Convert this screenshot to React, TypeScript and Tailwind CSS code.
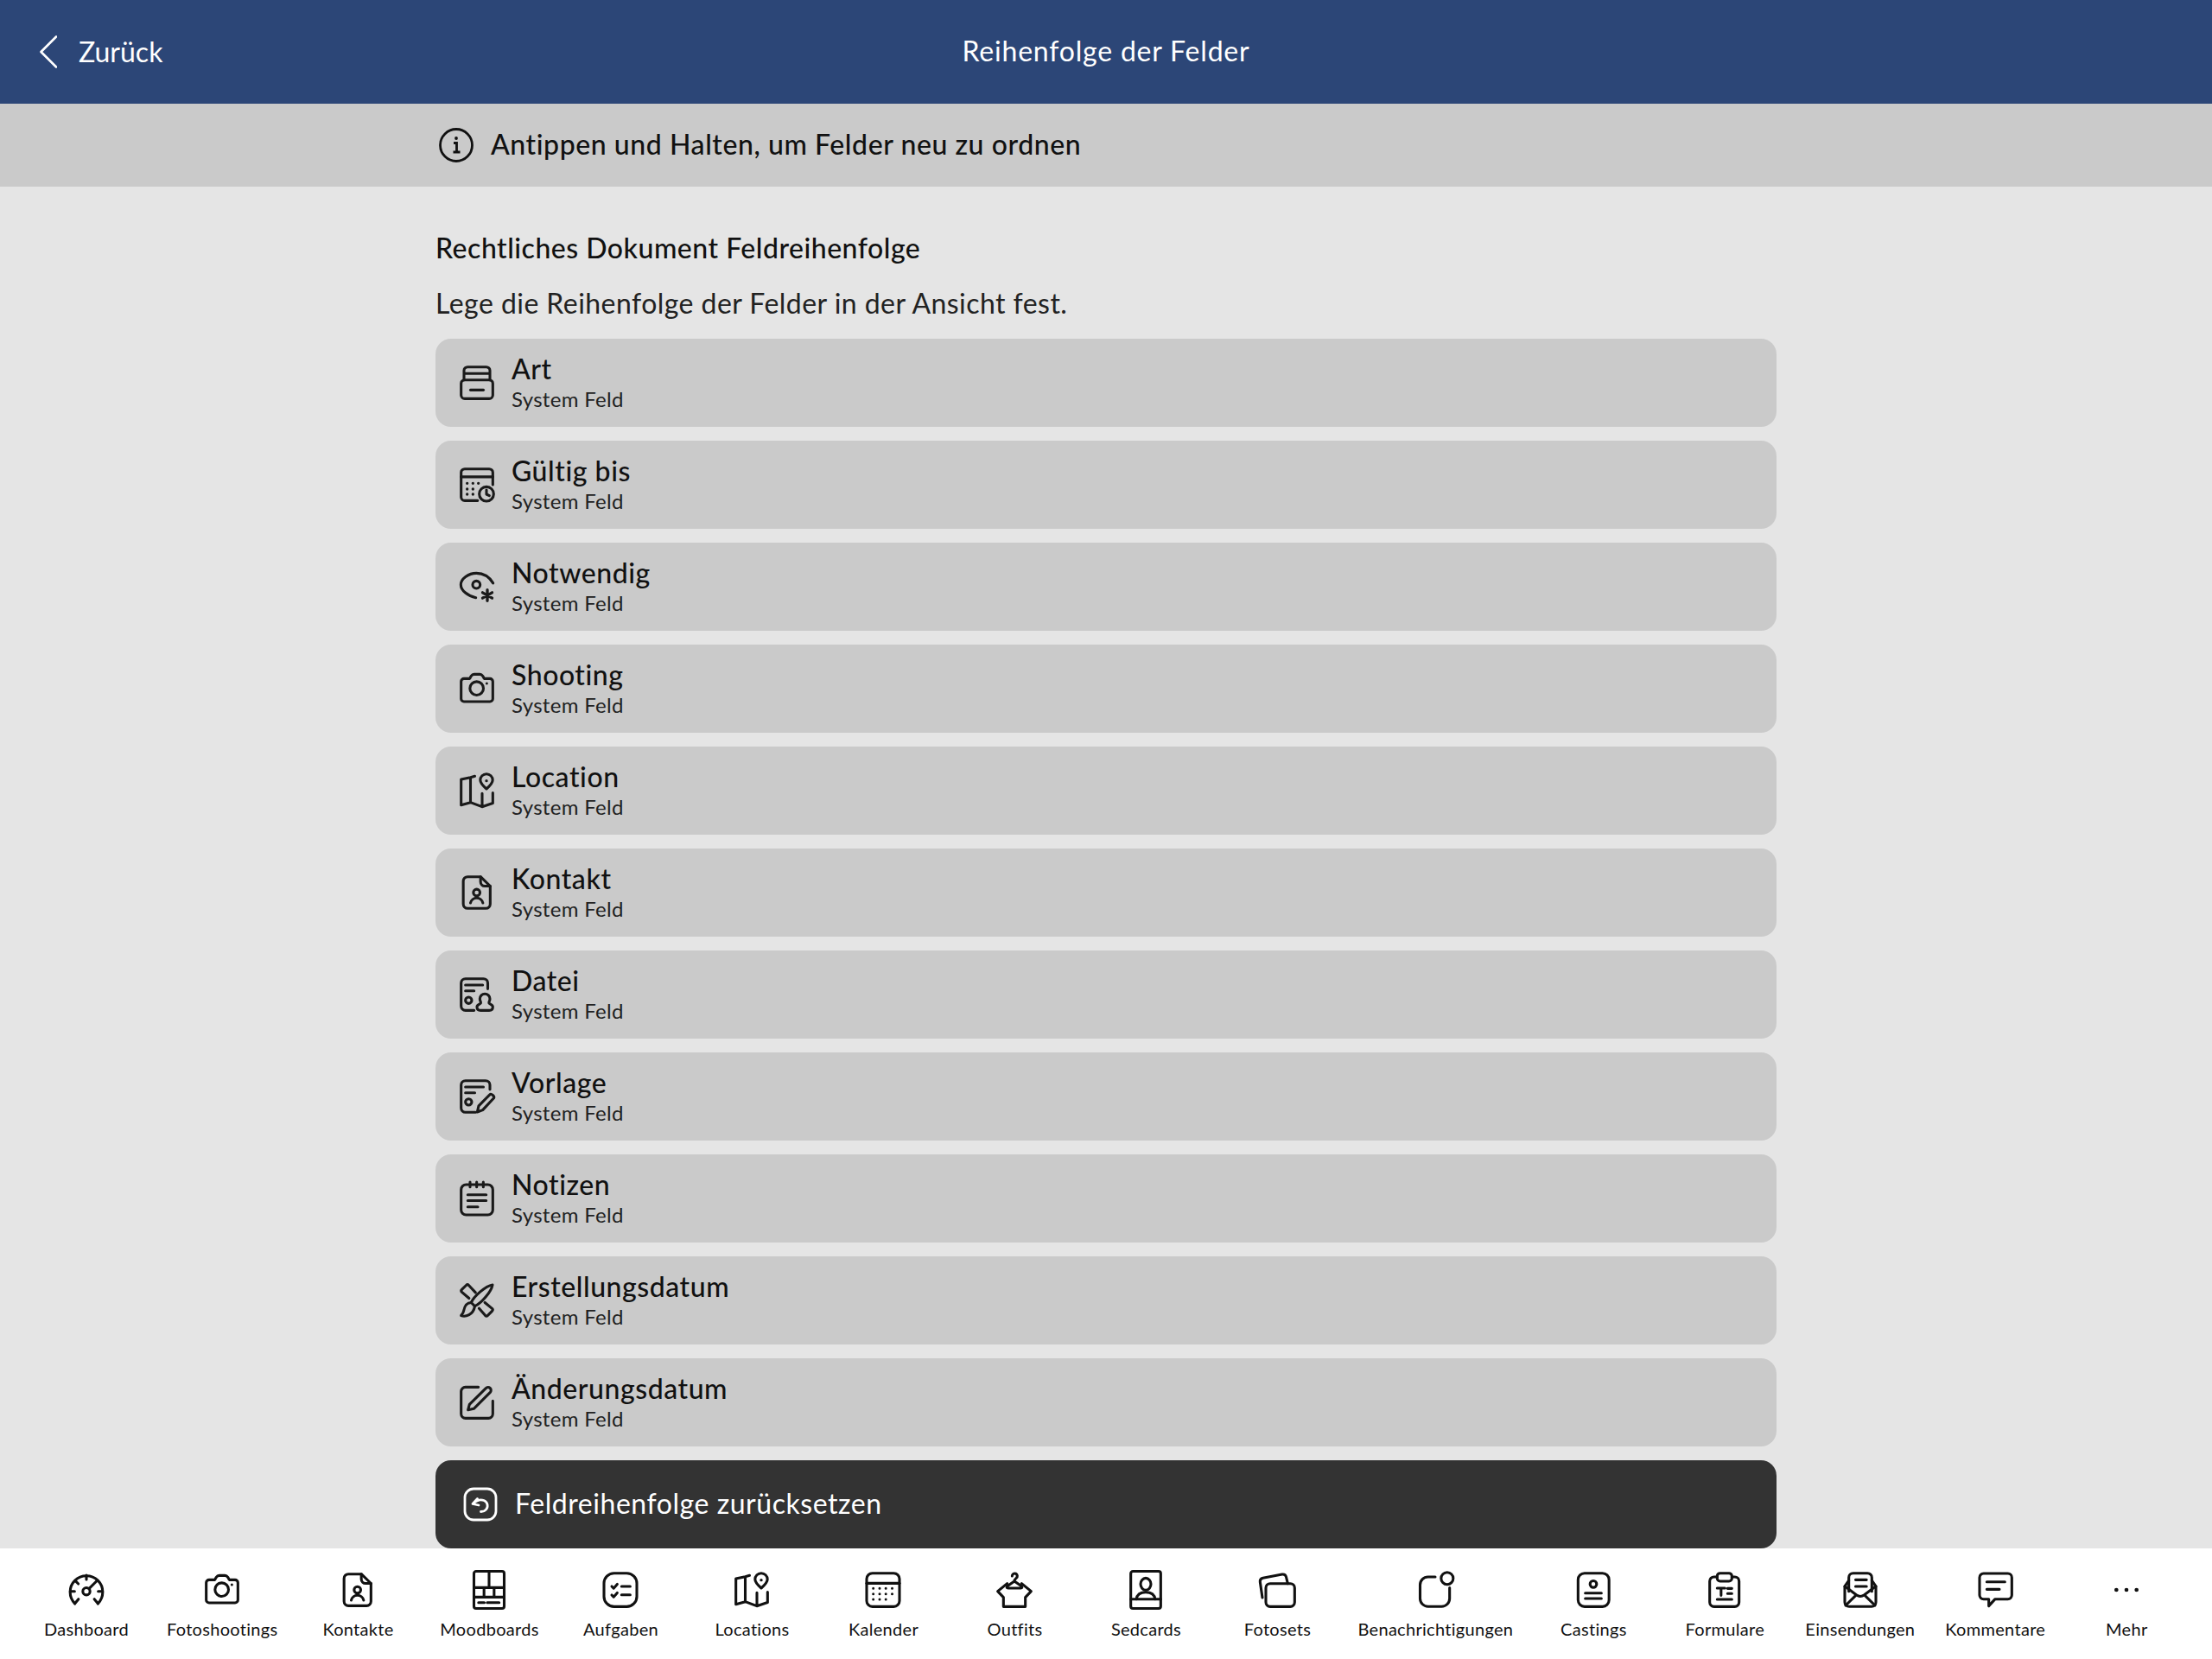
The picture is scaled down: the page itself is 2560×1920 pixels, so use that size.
import type { ReactNode } from 'react'

const font = { fontFamily: 'Lato, "Noto Sans", sans-serif' }

function Icon({ children, className = 'text-[#1a1a1a]' }: { children: ReactNode; className?: string }) {
  return (
    <svg
      viewBox="0 0 24 24"
      fill="none"
      stroke="currentColor"
      strokeWidth="1.85"
      strokeLinecap="round"
      strokeLinejoin="round"
      className={`w-10 h-10 shrink-0 overflow-visible ${className}`}
    >
      {children}
    </svg>
  )
}

const drawer = (
  <>
    <rect x="1" y="10" width="22" height="13" rx="2.5" />
    <path d="M3 10V3.5A2.5 2.5 0 0 1 5.500 1h13A2.500 2.500 0 0 1 21 3.500V10M3 5.500h18" />
    <path d="M7.500 17h9" />
  </>
)
const calendarClock = (
  <>
    <path d="M12.500 23H3.500A2.500 2.500 0 0 1 1 20.500V3.500A2.500 2.500 0 0 1 3.500 1h17A2.500 2.500 0 0 1 23 3.500V12" />
    <path d="M1 6.500h22" />
    <circle cx="18.600" cy="18.400" r="5" />
    <path d="M18.600 15.600v3l2 1" />
    <g strokeWidth="2">
      <path d="M5.200 11h.01M9.200 11h.01M13 11h.01M5.200 15h.01M9.200 15h.01M5.200 18.600h.01M9.200 18.600h.01" />
    </g>
  </>
)
const eyeStar = (
  <>
    <path d="M23.200 9.500C20.500 5 16 2.600 11.600 2.600 6 2.600 .8 6.500 .8 10.600c0 4 5 8 10.400 9" />
    <circle cx="11.600" cy="10.600" r="2.600" />
    <path strokeWidth="2" d="M19.200 14.200v7.600M15.900 16.100l6.600 3.800M22.500 16.100l-6.600 3.800" />
  </>
)
const camera = (
  <>
    <path d="M7 5l1-1.800Q8.800 2 10 2h4q1.200 0 2 1.200L17 5h4a2 2 0 0 1 2 2v12a2 2 0 0 1-2 2H3a2 2 0 0 1-2-2V7a2 2 0 0 1 2-2z" />
    <circle cx="11.800" cy="11.800" r="4.700" />
    <path strokeWidth="1.800" d="M18.800 8.400h.01" />
  </>
)
const mapPin = (
  <>
    <path d="M18.600 10.800c-2.800-2.400-4.300-4-4.300-6.100a4.300 4.300 0 0 1 8.600 0c0 2.100-1.500 3.700-4.300 6.100z" />
    <path strokeWidth="2" d="M18.600 5.200h.01" />
    <path d="M10.500 2L7.500 2.800 1 4.200V22l6.500-1.800 8 3 7.500-2.500V13.500M7.500 2.800v17.400M15.600 14v9" />
  </>
)
const docPerson = (
  <>
    <path d="M14.500 1H5.500a3 3 0 0 0-3 3v16a3 3 0 0 0 3 3h12.700a3 3 0 0 0 3-3V7.500z" />
    <path d="M14.500 1v3.500a3 3 0 0 0 3 3h3.700" />
    <circle cx="11.800" cy="12" r="2.300" />
    <path d="M7.500 19.200a4.400 4.400 0 0 1 8.600 0" />
  </>
)
const docUser = (
  <>
    <path d="M19.500 8V4a3 3 0 0 0-3-3H4a3 3 0 0 0-3 3v16a3 3 0 0 0 3 3h6" />
    <path d="M4 5.400h12M4 9.400h6" />
    <circle cx="6.200" cy="16" r="2.200" />
    <path d="M17.500 11.500a3.500 3.500 0 0 0-3.500 3.500c0 1.600 1 2.200.6 3-.4.700-2.600.8-2.600 2.500 0 1.500 1 2.500 2.500 2.500h6c1.500 0 2.500-1 2.500-2.500 0-1.700-2.200-1.800-2.600-2.500-.4-.8.600-1.400.6-3a3.500 3.500 0 0 0-3.500-3.500z" />
  </>
)
const docPen = (
  <>
    <path d="M21 7V4a3 3 0 0 0-3-3H4a3 3 0 0 0-3 3v16a3 3 0 0 0 3 3h7" />
    <path d="M4 5.400h12.500M4 9.400h6.500" />
    <circle cx="6.200" cy="15.800" r="2.200" />
    <path d="M12.200 22.800l1-4.300 7.700-7.800c1-1 3.700 1.200 2.700 2.500l-7.600 8.200z" />
  </>
)
const notes = (
  <>
    <rect x="1" y="2.400" width="22" height="21" rx="3.500" />
    <path d="M7.200 .6v3.400M11.800 .6v3.400M16.400 .6v3.400" />
    <path d="M5.600 9.400h12.800M5.600 13.500h12.800M5.600 17.800h7" />
  </>
)
const tools = (
  <>
    <path d="M6.500 10.500L1.500 6.200Q.6 5.300 1.500 4.400L4.500 1.500Q5.400.6 6.300 1.500L11 6.500" />
    <path d="M13.500 17.500l4.200 4.900q.9.900 1.800 0l3-3q.9-.9 0-1.800L17.500 13.500" />
    <path d="M22.800 1.200C18 2 10 9 8 13.500L10.500 16C15 14 22 6 22.800 1.200z" />
    <path d="M8 13.500C4 13.500 3.200 17 2.700 19.500 2.300 21.500 1 22 1 22.500c3 1.200 8.500-.5 9.500-6.500" />
  </>
)
const edit = (
  <>
    <path d="M13 1.400H4a3 3 0 0 0-3 3V20a3 3 0 0 0 3 3h16a3 3 0 0 0 3-3v-9" />
    <path d="M5.800 17.200l1-3.800L18.200 2.200a2 2 0 0 1 3 2.800L9.800 16.400z" />
  </>
)
const gauge = (
  <>
    <path d="M4 21.500L6.500 18.400M20 21.500L17.500 18.400" />
    <path d="M4 21.500A11.300 11.300 0 1 1 20 21.500" />
    <circle cx="12" cy="13" r="2.500" />
    <path d="M13.800 11.200L19 6M12 1.800v3M4.400 5.800l2 2M.8 13h3M20.200 13h3" />
  </>
)
const moodboard = (
  <>
    <rect x="1.500" y="-.9" width="21" height="25.800" rx="1.500" />
    <path d="M1.500 10.400h21M1.500 17h21M12 -.9v11.300M8.500 10.400V17M15.500 10.400V17" />
    <path d="M4.700 20.800h4M10.700 20.800h8.300" />
  </>
)
const tasks = (
  <>
    <rect x=".6" y=".4" width="22.800" height="23.200" rx="7" />
    <path d="M6 9.600l1.300 1.300 2.500-2.800M6 15.600l1.300 1.300 2.500-2.800M12.800 9.600h6M12.800 15.400h6" />
  </>
)
const calendar = (
  <>
    <rect x=".6" y=".4" width="22.800" height="23.200" rx="4" />
    <path d="M.6 7.400h22.800" />
    <path
      strokeWidth="1.800"
      d="M5.200 11h.01M9.600 11h.01M13.900 11h.01M18.300 11h.01M5.200 14.800h.01M9.600 14.800h.01M13.900 14.800h.01M18.300 14.800h.01M5.200 18.600h.01M9.600 18.600h.01M13.900 18.600h.01"
    />
  </>
)
const shirt = (
  <>
    <path d="M7 7.600L.4 13l4 4.200v6.400h15.200v-6.400l4-4.200L17 7.600" />
    <path d="M10.400 2.400a1.800 1.800 0 1 1 2.900 1.400c-.9.700-1.300 1-1.300 2.200L7 9.500q-.8 1.300.6 1.300h8.800q1.400 0 .6-1.300L12 6" />
  </>
)
const sedcard = (
  <>
    <rect x="1.600" y="-.9" width="20.800" height="25.800" rx="1.500" />
    <path d="M1.600 18.400h20.800" />
    <ellipse cx="12" cy="8" rx="3.600" ry="4.200" />
    <path d="M5.500 18.400C6 14.500 8.500 13.600 12 13.600s6 .9 6.500 4.800" />
  </>
)
const photosets = (
  <>
    <rect x="4.200" y="7.600" width="20" height="16" rx="3" />
    <path d="M1.800 17.400L.2 6.500Q-.1 4.200 2.200 3.700L15.500 1.200Q17.800.9 18.300 3L19.400 7.600" />
  </>
)
const bell = (
  <>
    <path d="M12 3H7a5.500 5.500 0 0 0-5.500 5.500V18A5.500 5.500 0 0 0 7 23.500h9.500A5.500 5.500 0 0 0 22 18v-7.500" />
    <circle cx="20.300" cy="4" r="4.200" />
  </>
)
const casting = (
  <>
    <rect x="1.400" y=".4" width="21.500" height="23.200" rx="4.500" />
    <circle cx="12" cy="8" r="2.300" />
    <path d="M6.400 14.200h11.200M6.400 18h11.200" />
  </>
)
const form = (
  <>
    <path d="M6.800 3H4.600a3 3 0 0 0-3 3v14.600a3 3 0 0 0 3 3h14.400a3 3 0 0 0 3-3V6a3 3 0 0 0-3-3H17" />
    <rect x="6.800" y=".4" width="10.200" height="5.600" rx="2" />
    <path d="M6.800 10.800h5.400M9.500 10.800v5M14 11h3M14 14.500h3M6.800 18.600h10.200" />
  </>
)
const mail = (
  <>
    <path d="M4 5.500L1.200 9.500V20.500a3 3 0 0 0 3 3h15.600a3 3 0 0 0 3-3V9.500L20 5.500" />
    <path d="M4 13V3.400a3 3 0 0 1 3-3h10a3 3 0 0 1 3 3V13" />
    <path d="M1.200 9.500l8 6q2.800 2 5.600 0l8-6M1.800 22.800l7.400-7.300M22.200 22.800l-7.400-7.300" />
    <path d="M8.700 5h7.600M8.700 9.600h7.600" />
  </>
)
const comment = (
  <>
    <path d="M4 .6h16.800a2.800 2.800 0 0 1 2.800 2.800v12.200a2.800 2.800 0 0 1-2.800 2.800H12L7.600 23.200V18.400H4a2.800 2.800 0 0 1-2.800-2.800V3.400A2.800 2.800 0 0 1 4 .6z" />
    <path d="M6.200 6.400h12.600M6.200 11.600h8.800" />
  </>
)
const dots = (
  <g fill="currentColor" stroke="none">
    <circle cx="5" cy="12" r="1.400" />
    <circle cx="12" cy="12" r="1.400" />
    <circle cx="19" cy="12" r="1.400" />
  </g>
)

const fields: [string, ReactNode][] = [
  ['Art', drawer],
  ['Gültig bis', calendarClock],
  ['Notwendig', eyeStar],
  ['Shooting', camera],
  ['Location', mapPin],
  ['Kontakt', docPerson],
  ['Datei', docUser],
  ['Vorlage', docPen],
  ['Notizen', notes],
  ['Erstellungsdatum', tools],
  ['Änderungsdatum', edit],
]

const tabs: [string, ReactNode][] = [
  ['Dashboard', gauge],
  ['Fotoshootings', camera],
  ['Kontakte', docPerson],
  ['Moodboards', moodboard],
  ['Aufgaben', tasks],
  ['Locations', mapPin],
  ['Kalender', calendar],
  ['Outfits', shirt],
  ['Sedcards', sedcard],
  ['Fotosets', photosets],
  ['Benachrichtigungen', bell],
  ['Castings', casting],
  ['Formulare', form],
  ['Einsendungen', mail],
  ['Kommentare', comment],
  ['Mehr', dots],
]

export default function App() {
  return (
    <div className="flex flex-col h-[1920px] bg-[#e5e5e5] text-[#111111] overflow-hidden" style={font}>
      {/* Top bar */}
      <header className="relative h-[120px] shrink-0 bg-[#2c4677] text-white flex items-center justify-center">
        <button className="absolute left-[46px] top-[41px] flex items-center gap-[25px] h-[38px]">
          <svg viewBox="0 0 20 38" fill="none" stroke="currentColor" strokeWidth="2.600" strokeLinecap="round" strokeLinejoin="round" className="w-5 h-[38px]">
            <path d="M19 1.500L1.500 19 19 36.500" />
          </svg>
          <span className="text-[32px] leading-none">Zurück</span>
        </button>
        <h1 className="text-[32px] leading-none tracking-[0.8px] -mt-[2px]">Reihenfolge der Felder</h1>
      </header>

      {/* Hint */}
      <div className="h-[96px] shrink-0 bg-[#cacaca] flex justify-center">
        <div className="w-[1552px] flex items-center gap-5 pl-[4px]">
          <svg viewBox="0 0 40 40" fill="none" stroke="#111111" className="w-10 h-10 shrink-0">
            <circle cx="20" cy="20" r="18.500" strokeWidth="2.800" />
            <path d="M17 17.500h3.500V28M16.500 28h8" strokeWidth="2.800" />
            <circle cx="20" cy="12" r="1.900" fill="#111111" stroke="none" />
          </svg>
          <span className="text-[32px] leading-none font-medium tracking-[0.57px] -mt-[2px]">Antippen und Halten, um Felder neu zu ordnen</span>
        </div>
      </div>

      {/* Field order */}
      <main className="flex-1 min-h-0 flex justify-center">
        <div className="w-[1552px] flex flex-col">
          <h2 className="text-[32px] leading-[40px] font-medium tracking-[0.5px] mt-[51px]">Rechtliches Dokument Feldreihenfolge</h2>
          <p className="text-[32px] leading-[40px] font-normal tracking-[0.45px] text-[#222222] mt-[24px] mb-[21px]">Lege die Reihenfolge der Felder in der Ansicht fest.</p>
          <div className="flex flex-col gap-4">
            {fields.map(([label, icon]) => (
              <div key={label} className="h-[102px] rounded-[18px] bg-[#cacaca] flex items-center pl-[28px] gap-[20px]">
                <Icon>{icon}</Icon>
                <div className="flex flex-col">
                  <span className="text-[32px] leading-[40px] font-medium tracking-[0.55px] -mt-[2px]">{label}</span>
                  <span className="text-[24px] leading-[30px] font-normal tracking-[0.3px] text-[#222222]">System Feld</span>
                </div>
              </div>
            ))}
            <button className="h-[102px] rounded-[18px] bg-[#333333] text-white flex items-center pl-[32px] gap-5">
              <svg viewBox="0 0 40 40" fill="none" stroke="currentColor" strokeWidth="2.800" strokeLinecap="round" strokeLinejoin="round" className="w-10 h-10 shrink-0">
                <rect x="2" y="2" width="36" height="36" rx="10" />
                <path d="M16.500 13.500L11 19.500l7 1.500M12 19c3.500-3.500 8-5 12-3.500 5 2 5 8 2.500 10.500q-2 2.500-6 2.500" />
              </svg>
              <span className="text-[32px] leading-none tracking-[0.55px] -mt-[2px]">Feldreihenfolge zurücksetzen</span>
            </button>
          </div>
        </div>
      </main>

      {/* Tab bar */}
      <nav className="h-[128px] shrink-0 bg-white flex px-6">
        {tabs.map(([label, icon]) => (
          <div key={label} className="min-w-[152px] px-[17px] shrink-0 flex flex-col items-center pt-[28px]">
            <Icon className="text-[#111111]">{icon}</Icon>
            <span className="text-[20px] leading-[26px] tracking-[0.3px] mt-[12px] whitespace-nowrap">{label}</span>
          </div>
        ))}
      </nav>
    </div>
  )
}
